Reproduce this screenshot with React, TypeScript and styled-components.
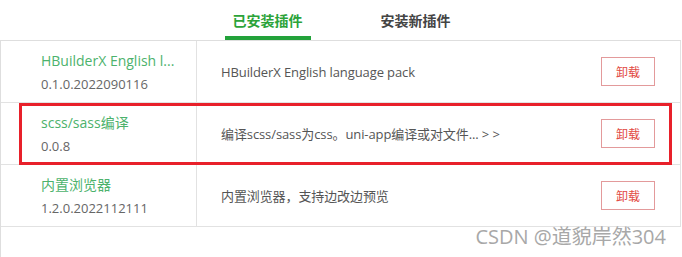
import React, { useState } from "react";
import styled, { createGlobalStyle } from "styled-components";

type Plugin = {
  name: string;
  version: string;
  desc: string;
  marked?: boolean;
};

const plugins: Plugin[] = [
  {
    name: "HBuilderX English l...",
    version: "0.1.0.2022090116",
    desc: "HBuilderX English language pack",
  },
  {
    name: "scss/sass编译",
    version: "0.0.8",
    desc: "编译scss/sass为css。uni-app编译或对文件... > >",
    marked: true,
  },
  {
    name: "内置浏览器",
    version: "1.2.0.2022112111",
    desc: "内置浏览器，支持边改边预览",
  },
];

const App: React.FC = () => {
  const [tab, setTab] = useState(0);

  return (
    <>
      <GlobalStyle />
      <Page>
        {/* 顶部标签 */}
        <Tabs>
          <Tab $active={tab === 0} onClick={() => setTab(0)}>
            已安装插件
          </Tab>
          <Tab $active={tab === 1} onClick={() => setTab(1)}>
            安装新插件
          </Tab>
        </Tabs>

        {/* 插件列表 */}
        <Panel>
          {plugins.map((p) => (
            <Row key={p.name}>
              <NameCell>
                <Name>{p.name}</Name>
                <Version>{p.version}</Version>
              </NameCell>
              <DescCell>
                <Desc>{p.desc}</Desc>
                <UninstallButton>卸载</UninstallButton>
              </DescCell>
              {p.marked && <Highlight />}
            </Row>
          ))}
        </Panel>

        <Watermark>CSDN @道貌岸然304</Watermark>
      </Page>
    </>
  );
};

export default App;

// Styled Components
const GlobalStyle = createGlobalStyle`
  html, body {
    margin: 0;
    padding: 0;
    background: #ffffff;
  }
  body {
    font-family: "Open Sans", "Noto Sans CJK SC", sans-serif;
  }
`;

const Page = styled.div`
  position: relative;
  width: 682px;
  height: 257px;
  overflow: hidden;
  display: flex;
  flex-direction: column;
`;

const Tabs = styled.div`
  display: flex;
  justify-content: center;
  gap: 62px;
  height: 40px;
  padding-left: 1px;
`;

const Tab = styled.div<{ $active: boolean }>`
  box-sizing: border-box;
  width: 86px;
  height: 40px;
  padding-top: 4px;
  display: flex;
  align-items: center;
  justify-content: center;
  font-size: 14px;
  font-weight: 700;
  color: ${(p) => (p.$active ? "#2ba339" : "#444")};
  border-bottom: 4px solid ${(p) => (p.$active ? "#23a23a" : "transparent")};
  cursor: pointer;
`;

const Panel = styled.div`
  flex: 1;
  width: 681px;
  border-top: 1px solid #dedede;
  border-left: 1px solid #dedede;
  box-sizing: border-box;
`;

const Row = styled.div`
  position: relative;
  display: grid;
  grid-template-columns: 196px 1fr;
  height: 62px;
  box-sizing: border-box;
  border-bottom: 1px solid #e2e2e2;
  border-right: 1px solid #e2e2e2;
`;

const NameCell = styled.div`
  display: flex;
  flex-direction: column;
  padding: 10px 0 0 40px;
  border-right: 1px solid #e2e2e2;
  min-width: 0;
`;

const Name = styled.div`
  font-size: 14px;
  line-height: 20px;
  color: #4cb26c;
  white-space: nowrap;
`;

const Version = styled.div`
  margin-top: 3px;
  font-size: 13px;
  line-height: 20px;
  color: #666;
`;

const DescCell = styled.div`
  display: flex;
  align-items: center;
  justify-content: space-between;
  padding: 0 25px 0 24px;
`;

const Desc = styled.div`
  font-size: 13px;
  letter-spacing: -0.1px;
  color: #555;
  white-space: nowrap;
`;

const UninstallButton = styled.button`
  width: 54px;
  height: 29px;
  padding: 0;
  background: #fff;
  border: 1px solid #e39a9b;
  color: #e24a43;
  font-family: inherit;
  font-size: 12px;
  cursor: pointer;
`;

const Highlight = styled.div`
  position: absolute;
  left: 18px;
  top: 0;
  width: 653px;
  height: 62px;
  box-sizing: border-box;
  border: 3px solid #e8202a;
  pointer-events: none;
`;

const Watermark = styled.div`
  position: absolute;
  right: 16px;
  top: 224px;
  font-size: 20px;
  line-height: 26px;
  color: #a8a8a8;
  white-space: nowrap;
`;
